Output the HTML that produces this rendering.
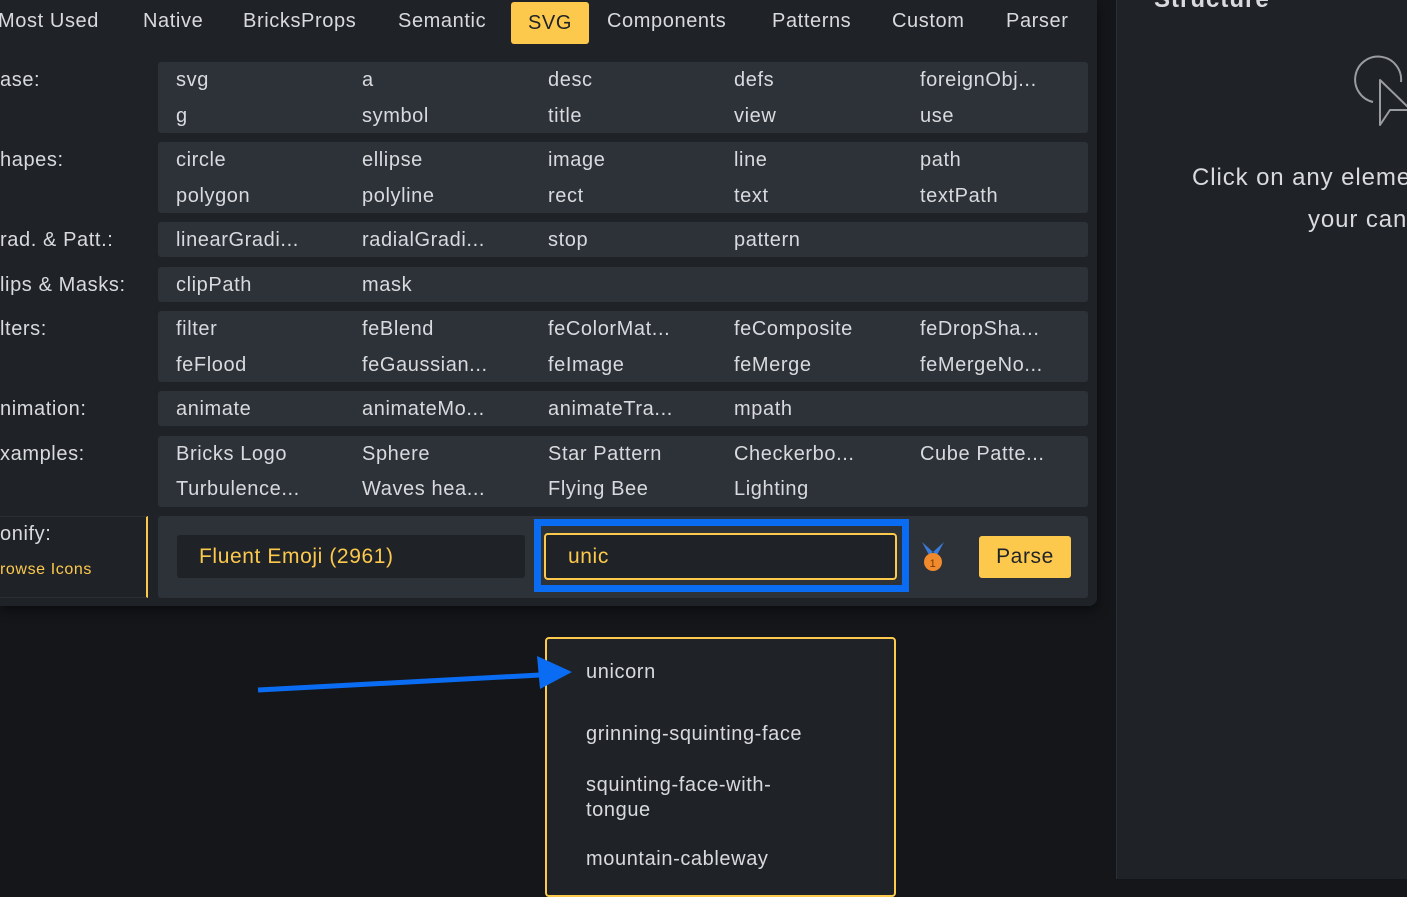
<!DOCTYPE html><html><head><style>
*{margin:0;padding:0;box-sizing:border-box}
body{width:1407px;height:879px;overflow:hidden;background:#141619;font-family:"Liberation Sans",sans-serif;position:relative;color:#d8dadd;letter-spacing:0.6px}
.a{position:absolute;white-space:nowrap}
.panel{position:absolute;left:0;top:0;width:1097px;height:606px;background:#1f2227;border-radius:0 0 8px 0;box-shadow:0 4px 12px rgba(0,0,0,.5)}
.tab{position:absolute;top:10px;font-size:20px;color:#d8dadd}
.row{position:absolute;left:158px;width:930px;background:#2d3239;border-radius:3px}
.lab{position:absolute;left:0;font-size:20px;color:#d8dadd}
.c{position:absolute;font-size:20px;color:#d8dadd}
.right{position:absolute;left:1116px;top:0;width:291px;height:879px;background:#1f2226;border-left:1px solid #2c3036;overflow:hidden}
</style></head><body>
<div class="right">
<div class="a" style="left:37px;top:-14px;font-size:24px;font-weight:bold;color:#d8dadd;letter-spacing:1px">Structure</div>
<svg class="a" style="left:236px;top:54px" width="60" height="76" viewBox="0 0 60 76"><path d="M20 48 A23 23 0 1 1 48 28" fill="none" stroke="#9a9ca0" stroke-width="2"/><path d="M27 26 L27 71 L37 56 L58 56 Z" fill="none" stroke="#9a9ca0" stroke-width="2" stroke-linejoin="round"/></svg>
<div class="a" style="left:75px;top:164px;font-size:24px;color:#d8dadd;letter-spacing:0.9px">Click on any eleme</div>
<div class="a" style="left:191px;top:206px;font-size:24px;color:#d8dadd;letter-spacing:0.9px">your can</div>
</div>
<div class="panel">
<div class="tab" style="left:-2px">Most Used</div>
<div class="tab" style="left:143px">Native</div>
<div class="tab" style="left:243px">BricksProps</div>
<div class="tab" style="left:398px">Semantic</div>
<div class="a" style="left:511px;top:2px;width:78px;height:42px;background:#fdc94d;border-radius:3px;color:#1f2227;font-size:20px;text-align:center;line-height:42px">SVG</div>
<div class="tab" style="left:607px">Components</div>
<div class="tab" style="left:772px">Patterns</div>
<div class="tab" style="left:892px">Custom</div>
<div class="tab" style="left:1006px">Parser</div>

<div class="lab" style="top:69px">ase:</div>
<div class="row" style="top:62px;height:71px"></div>
<div class="lab" style="top:149px">hapes:</div>
<div class="row" style="top:142px;height:71px"></div>
<div class="lab" style="top:229px">rad. &amp; Patt.:</div>
<div class="row" style="top:222px;height:35px"></div>
<div class="lab" style="top:274px">lips &amp; Masks:</div>
<div class="row" style="top:267px;height:35px"></div>
<div class="lab" style="top:318px">lters:</div>
<div class="row" style="top:311px;height:71px"></div>
<div class="lab" style="top:398px">nimation:</div>
<div class="row" style="top:391px;height:35px"></div>
<div class="lab" style="top:443px">xamples:</div>
<div class="row" style="top:436px;height:71px"></div>

<div class="c" style="left:176px;top:69px">svg</div><div class="c" style="left:362px;top:69px">a</div><div class="c" style="left:548px;top:69px">desc</div><div class="c" style="left:734px;top:69px">defs</div><div class="c" style="left:920px;top:69px">foreignObj...</div>
<div class="c" style="left:176px;top:105px">g</div><div class="c" style="left:362px;top:105px">symbol</div><div class="c" style="left:548px;top:105px">title</div><div class="c" style="left:734px;top:105px">view</div><div class="c" style="left:920px;top:105px">use</div>
<div class="c" style="left:176px;top:149px">circle</div><div class="c" style="left:362px;top:149px">ellipse</div><div class="c" style="left:548px;top:149px">image</div><div class="c" style="left:734px;top:149px">line</div><div class="c" style="left:920px;top:149px">path</div>
<div class="c" style="left:176px;top:185px">polygon</div><div class="c" style="left:362px;top:185px">polyline</div><div class="c" style="left:548px;top:185px">rect</div><div class="c" style="left:734px;top:185px">text</div><div class="c" style="left:920px;top:185px">textPath</div>
<div class="c" style="left:176px;top:229px">linearGradi...</div><div class="c" style="left:362px;top:229px">radialGradi...</div><div class="c" style="left:548px;top:229px">stop</div><div class="c" style="left:734px;top:229px">pattern</div>
<div class="c" style="left:176px;top:274px">clipPath</div><div class="c" style="left:362px;top:274px">mask</div>
<div class="c" style="left:176px;top:318px">filter</div><div class="c" style="left:362px;top:318px">feBlend</div><div class="c" style="left:548px;top:318px">feColorMat...</div><div class="c" style="left:734px;top:318px">feComposite</div><div class="c" style="left:920px;top:318px">feDropSha...</div>
<div class="c" style="left:176px;top:354px">feFlood</div><div class="c" style="left:362px;top:354px">feGaussian...</div><div class="c" style="left:548px;top:354px">feImage</div><div class="c" style="left:734px;top:354px">feMerge</div><div class="c" style="left:920px;top:354px">feMergeNo...</div>
<div class="c" style="left:176px;top:398px">animate</div><div class="c" style="left:362px;top:398px">animateMo...</div><div class="c" style="left:548px;top:398px">animateTra...</div><div class="c" style="left:734px;top:398px">mpath</div>
<div class="c" style="left:176px;top:443px">Bricks Logo</div><div class="c" style="left:362px;top:443px">Sphere</div><div class="c" style="left:548px;top:443px">Star Pattern</div><div class="c" style="left:734px;top:443px">Checkerbo...</div><div class="c" style="left:920px;top:443px">Cube Patte...</div>
<div class="c" style="left:176px;top:478px">Turbulence...</div><div class="c" style="left:362px;top:478px">Waves hea...</div><div class="c" style="left:548px;top:478px">Flying Bee</div><div class="c" style="left:734px;top:478px">Lighting</div>

<div class="a" style="left:0;top:516px;width:148px;height:82px;border-right:2px solid #fdc94d;border-top:1px solid #2a2e34;border-bottom:1px solid #2a2e34"></div>
<div class="lab" style="top:523px">onify:</div>
<div class="a" style="left:0;top:561px;font-size:16px;color:#fdc94d">rowse Icons</div>
<div class="row" style="top:516px;height:82px"></div>
<div class="a" style="left:177px;top:535px;width:348px;height:43px;background:#1f2227;border-radius:3px;color:#fdc94d;font-size:21px;padding-left:22px;line-height:43px">Fluent Emoji (2961)</div>
<div class="a" style="left:534px;top:519px;width:375px;height:73px;border:7px solid #0a6cf2"></div>
<div class="a" style="left:544px;top:533px;width:353px;height:47px;background:#1f2227;border:2px solid #fdc94d;border-radius:4px;color:#fdc94d;font-size:21px;padding-left:22px;line-height:43px">unic</div>
<svg class="a" style="left:918px;top:541px" width="30" height="32" viewBox="0 0 30 32"><path d="M4 1 L11 14 L15 11 Z M26 1 L19 14 L15 11 Z" fill="#3b7bd9"/><circle cx="15" cy="21" r="9" fill="#f08a2c"/><text x="15" y="26" font-size="11" text-anchor="middle" fill="#7a3a00" font-family="Liberation Sans">1</text></svg>
<div class="a" style="left:979px;top:536px;width:92px;height:42px;background:#fdc94d;border-radius:3px;color:#1f2227;font-size:21px;text-align:center;line-height:42px">Parse</div>
</div>

<div class="a" style="left:545px;top:637px;width:351px;height:260px;background:#1f2227;border:2px solid #fdc94d;border-radius:4px"></div>
<div class="c" style="left:586px;top:661px">unicorn</div>
<div class="c" style="left:586px;top:723px">grinning-squinting-face</div>
<div class="c" style="left:586px;top:773px;line-height:25px;white-space:normal;width:260px">squinting-face-with-<br>tongue</div>
<div class="c" style="left:586px;top:848px">mountain-cableway</div>
<svg class="a" style="left:250px;top:650px" width="330" height="50" viewBox="0 0 330 50"><path d="M8 40 L290 25" stroke="#0a6cf2" stroke-width="5" fill="none"/><path d="M287 6 L322 22 L290 39 Z" fill="#0a6cf2"/></svg>
</body></html>
